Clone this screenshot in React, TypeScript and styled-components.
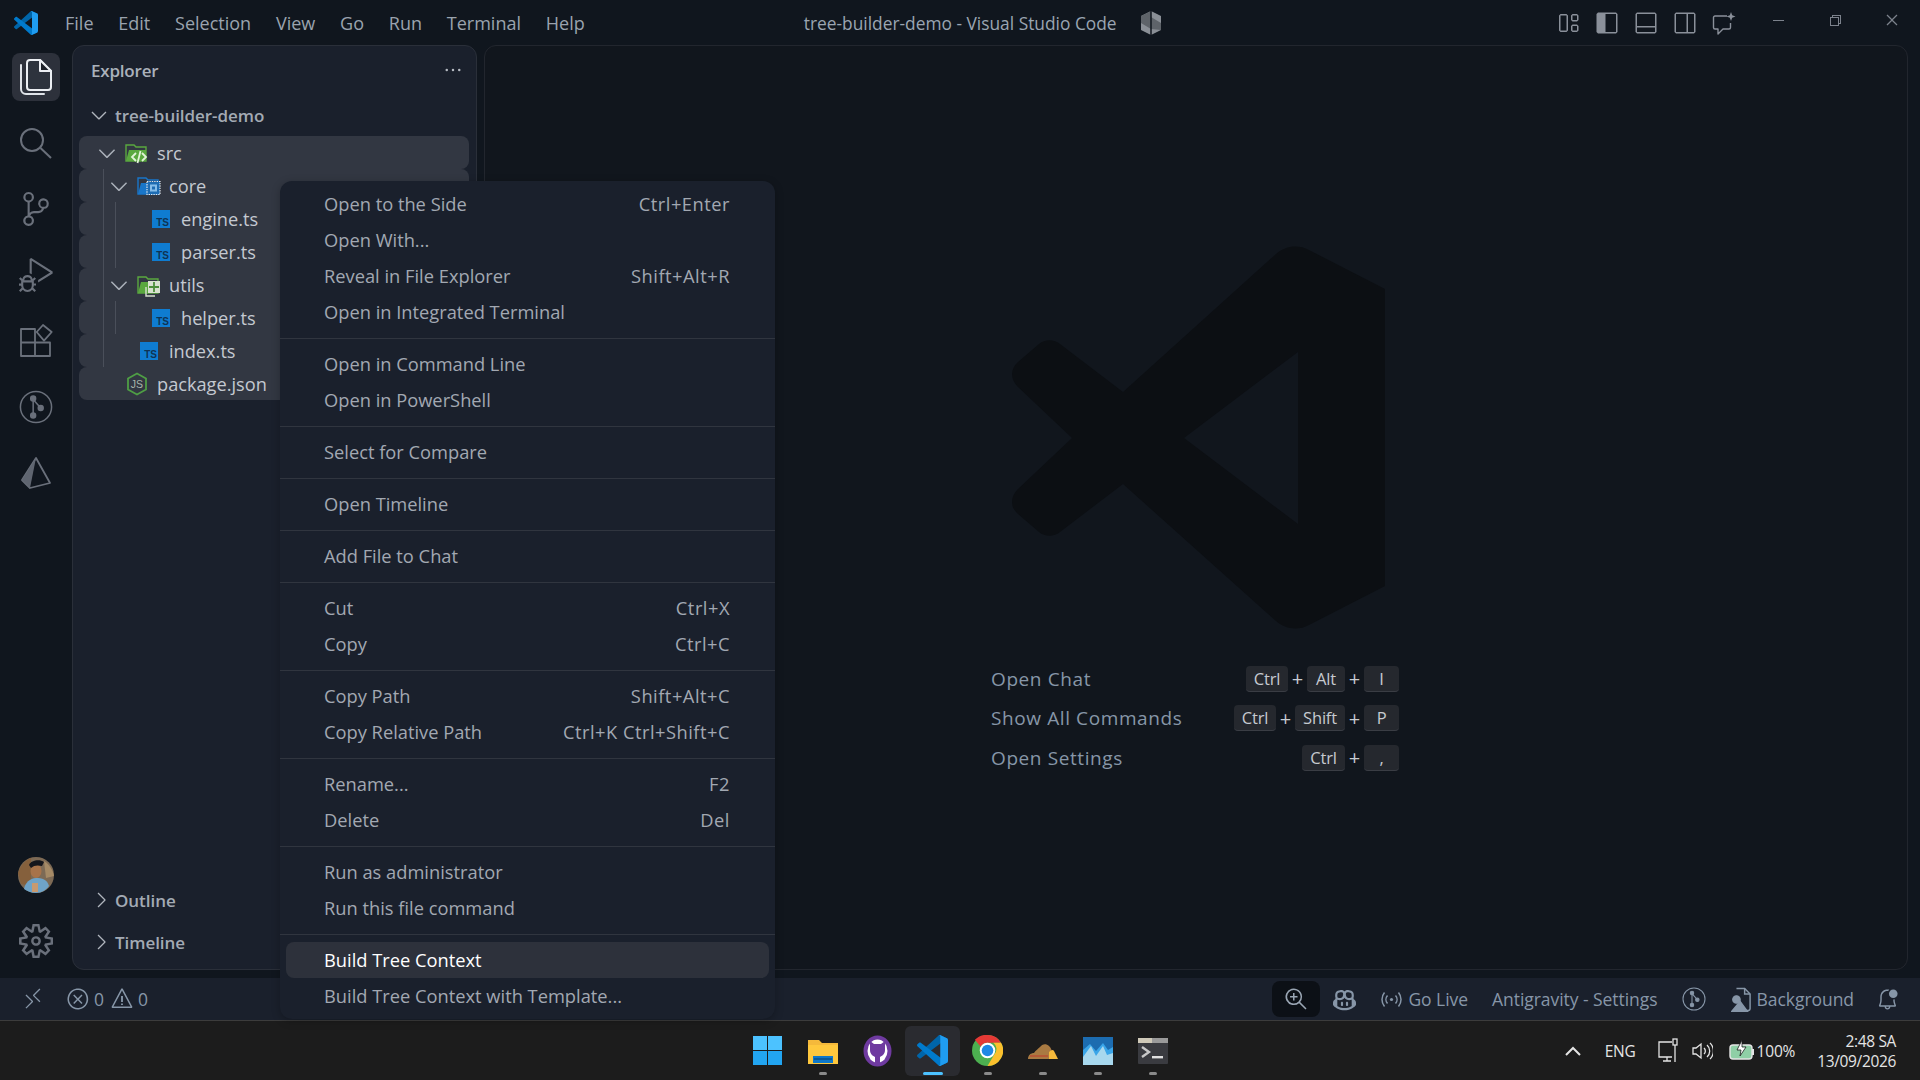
import React from "react";
import styled, { createGlobalStyle } from "styled-components";
import {
  VscSourceControl,
  VscDebugAlt,
  VscSettingsGear,
  VscLayout,
  VscLayoutSidebarLeft,
  VscLayoutPanelOff,
  VscLayoutSidebarRightOff,
  VscChevronDown,
  VscChevronRight,
  VscEllipsis,
  VscRemote,
  VscError,
  VscWarning,
  VscZoomIn,
  VscCopilot,
  VscBellDot,
  VscChromeMinimize,
  VscChromeRestore,
  VscChromeClose,
} from "react-icons/vsc";

const FONT = `"Open Sans", "Noto Sans", sans-serif`;

const GlobalStyle = createGlobalStyle`
  html, body {
    margin: 0;
    padding: 0;
    width: 1920px;
    height: 1080px;
    overflow: hidden;
    background: #1c1c1c;
    font-family: ${FONT};
  }
  * { box-sizing: border-box; }
`;

const Screen = styled.div`
  position: relative;
  width: 1920px;
  height: 1080px;
  display: flex;
  flex-direction: column;
  overflow: hidden;
`;

/* title bar */

const TitleBar = styled.div`
  height: 45px;
  flex: none;
  display: flex;
  align-items: center;
  background: #10161e;
`;

const LogoBox = styled.div`
  width: 24px;
  height: 24px;
  margin-left: 14px;
  display: flex;
`;

const MenuBar = styled.div`
  display: flex;
  gap: 24.8px;
  margin-left: 27px;
  font-size: 18px;
  color: #9aa3ae;
`;

const WindowTitle = styled.div`
  margin-left: 219px;
  display: flex;
  align-items: center;
  gap: 23px;
  font-size: 17.35px;
  color: #9aa5b2;
`;

const TitleTools = styled.div`
  margin-left: auto;
  display: flex;
  align-items: center;
  gap: 15px;
  color: #8a909a;
  font-size: 24px;
  margin-right: 184px;
`;

const WindowButtons = styled.div`
  position: absolute;
  top: 12px;
  right: 20px;
  display: flex;
  gap: 41px;
  color: #7c828c;
  font-size: 16px;
`;

/* middle */

const Middle = styled.div`
  flex: 1;
  display: flex;
  min-height: 0;
  background: #10161e;
  padding: 0 12px 8px 0;
`;

const ActivityBar = styled.div`
  width: 72px;
  flex: none;
  display: flex;
  flex-direction: column;
  align-items: center;
  padding-top: 8px;
`;

const ActivityItem = styled.div<{ $active?: boolean }>`
  width: 48px;
  height: 48px;
  margin-bottom: 18px;
  border-radius: 8px;
  display: flex;
  align-items: center;
  justify-content: center;
  font-size: 34px;
  color: ${(p) => (p.$active ? "#e6e9ee" : "#6a707b")};
  background: ${(p) => (p.$active ? "#2d313b" : "transparent")};
`;

const ActivityBottom = styled.div`
  margin-top: auto;
  display: flex;
  flex-direction: column;
  align-items: center;
  gap: 31px;
  padding-bottom: 12px;
  color: #6a707b;
  font-size: 34px;
`;

const Sidebar = styled.div`
  width: 405px;
  flex: none;
  display: flex;
  flex-direction: column;
  background: #1a202c;
  border: 1px solid #2a2f39;
  border-radius: 12px;
`;

const SidebarHead = styled.div`
  height: 48px;
  flex: none;
  display: flex;
  align-items: center;
  justify-content: space-between;
  padding: 0 10px 0 18px;
  font-size: 17px;
  font-weight: 600;
  letter-spacing: -0.2px;
  color: #aab1bb;
`;

const MoreButton = styled.div`
  color: #b5bac2;
  font-size: 20px;
  display: flex;
  margin-right: 3px;
`;

const SectionRow = styled.div<{ $pad: number; $gap: number }>`
  height: 42px;
  flex: none;
  display: flex;
  align-items: center;
  gap: ${(p) => p.$gap}px;
  padding-left: ${(p) => p.$pad}px;
  font-size: 17px;
  font-weight: 600;
  letter-spacing: -0.05px;
  color: #a3aab4;
  svg {
    font-size: 24px;
    flex: none;
    color: #b0b5bd;
  }
`;

const Tree = styled.div`
  display: flex;
  flex-direction: column;
  padding: 0 7px 0 6px;
  flex: 1;
`;

const Row = styled.div<{ $level: number }>`
  position: relative;
  height: 33px;
  flex: none;
  display: flex;
  align-items: center;
  padding-left: ${(p) => 20 + p.$level * 12}px;
  background: #323742;
  border-radius: 8px;
  font-size: 18.2px;
  color: #c4c9d1;
`;

const Guide = styled.span<{ $left: number }>`
  position: absolute;
  top: 0;
  bottom: 0;
  left: ${(p) => p.$left}px;
  width: 1px;
  background: #4a4f5a;
`;

const Chevron = styled.span`
  width: 16px;
  margin-right: 10px;
  flex: none;
  display: flex;
  justify-content: center;
  color: #aab0b9;
  font-size: 26px;
  svg {
    flex: none;
  }
`;

const Spacer = styled.span`
  width: 26px;
  flex: none;
`;

const RowIcon = styled.span`
  width: 24px;
  height: 24px;
  margin-right: 8px;
  flex: none;
  display: flex;
  align-items: center;
  justify-content: center;
`;

const TsIcon = styled.span`
  width: 18px;
  height: 18px;
  display: flex;
  align-items: flex-end;
  justify-content: flex-end;
  padding: 0 1px 1px 0;
  background: #0f7cd1;
  color: #0e3355;
  font-family: "Liberation Sans", sans-serif;
  font-size: 10px;
  line-height: 9px;
  font-weight: 700;
`;

const SideFooter = styled.div`
  margin-top: auto;
  padding-bottom: 6px;
`;

/* editor */

const Editor = styled.div`
  flex: 1;
  display: flex;
  flex-direction: column;
  align-items: center;
  margin-left: 7px;
  padding-top: 200px;
  background: #11161d;
  border: 1px solid #22262e;
  border-radius: 12px;
`;

const Watermark = styled.svg`
  width: 420px;
  height: 420px;
  margin-top: -25px;
  margin-left: 24px;
  flex: none;
`;

const Shortcuts = styled.div`
  width: 408px;
  margin-top: 18px;
  margin-right: 2px;
  display: flex;
  flex-direction: column;
`;

const ShortcutRow = styled.div`
  height: 39.5px;
  display: flex;
  align-items: center;
  justify-content: space-between;
`;

const ShortcutLabel = styled.span`
  font-size: 19px;
  letter-spacing: 0.6px;
  color: #8796a8;
`;

const Keys = styled.span`
  display: flex;
  align-items: center;
`;

const Plus = styled.span`
  width: 19px;
  text-align: center;
  font-size: 20px;
  color: #c8ccd2;
`;

const Key = styled.kbd<{ $w: number }>`
  width: ${(p) => p.$w}px;
  height: 26px;
  display: flex;
  align-items: center;
  justify-content: center;
  font-family: ${FONT};
  font-size: 16.5px;
  letter-spacing: -0.2px;
  color: #c6cad0;
  background: #25282e;
  border-radius: 4px;
  border-bottom: 1px solid #3a3d44;
`;

/* status bar */

const StatusBar = styled.div`
  height: 42px;
  flex: none;
  display: flex;
  align-items: center;
  background: #1a202c;
  color: #8796a8;
  font-size: 17.5px;
  letter-spacing: -0.05px;
`;

const StatusLeft = styled.div`
  display: flex;
  align-items: center;
  padding-left: 21px;
  svg {
    font-size: 24px;
  }
`;

const StatusGap = styled.span`
  width: 21px;
`;

const StatusCount = styled.span`
  margin: 0 6px 0 4px;
`;

const StatusRight = styled.div`
  margin-left: auto;
  display: flex;
  align-items: center;
  padding-right: 21px;
`;

const StatusItem = styled.div<{ $gap?: number; $inner?: number }>`
  display: flex;
  align-items: center;
  gap: ${(p) => p.$inner ?? 5}px;
  margin-left: ${(p) => p.$gap ?? 24}px;
  svg {
    font-size: 23px;
    flex: none;
  }
`;

const ZoomBox = styled.div`
  width: 48px;
  height: 36px;
  display: flex;
  align-items: center;
  justify-content: center;
  background: #0c1016;
  border-radius: 8px;
  color: #9aa6b4;
  font-size: 24px;
`;

/* taskbar */

const Taskbar = styled.div`
  position: relative;
  height: 60px;
  flex: none;
  display: flex;
  align-items: center;
  justify-content: center;
  background: #1c1c1c;
  border-top: 1px solid #3c3c3c;
`;

const TaskItem = styled.div<{ $active?: boolean }>`
  position: relative;
  width: 55px;
  height: 50px;
  display: flex;
  align-items: center;
  justify-content: center;
  border-radius: 6px;
  background: ${(p) => (p.$active ? "#2a2b30" : "transparent")};
  svg {
    flex: none;
  }
`;

const TaskDot = styled.span<{ $active?: boolean }>`
  position: absolute;
  bottom: 1px;
  left: 50%;
  transform: translateX(-50%);
  width: ${(p) => (p.$active ? 20 : 8)}px;
  height: 3px;
  border-radius: 2px;
  background: ${(p) => (p.$active ? "#4cc2ff" : "#8a8a8a")};
`;

const Tray = styled.div`
  position: absolute;
  right: 24px;
  top: 0;
  bottom: 0;
  display: flex;
  align-items: center;
  color: #e4e4e4;
  font-size: 15.5px;
  letter-spacing: -0.2px;
`;

const TrayCaret = styled.span`
  display: flex;
  font-size: 22px;
  margin-right: 24px;
`;

const TrayText = styled.span`
  margin-right: 22px;
`;

const TrayIcon = styled.span<{ $mr?: number }>`
  display: flex;
  margin-right: ${(p) => p.$mr ?? 14}px;
`;

const Clock = styled.div`
  margin-left: 22px;
  text-align: right;
  line-height: 20px;
  letter-spacing: -0.35px;
`;

/* context menu */

const ContextMenu = styled.div`
  position: absolute;
  left: 280px;
  top: 181px;
  width: 495px;
  height: 838px;
  padding: 5px 0;
  background: #1a202c;
  border-radius: 12px;
  box-shadow: 0 2px 8px rgba(0, 0, 0, 0.25);
  overflow: hidden;
`;

const MenuRow = styled.div<{ $selected?: boolean }>`
  height: 36px;
  margin: 0 6px 0 5.5px;
  padding: 0 39px 2px 38.5px;
  display: flex;
  align-items: center;
  justify-content: space-between;
  border-radius: 8px;
  font-size: 18.3px;
  color: ${(p) => (p.$selected ? "#ffffff" : "#a2a8b2")};
  background: ${(p) => (p.$selected ? "#2d313b" : "transparent")};
`;

const MenuKey = styled.span`
  letter-spacing: 0.5px;
`;

const MenuSep = styled.div`
  height: 1px;
  margin: 8px 0 7px;
  background: #30353f;
`;

function VsLogo({ size = 24 }: { size?: number }) {
  return (
    <svg width={size} height={size} viewBox="0 0 100 100">
      <path
        fill="#0065a9"
        d="M96.5 10.8 75.9.9c-2.4-1.2-5.2-.7-7.1 1.2L1.4 63.6c-1.8 1.7-1.8 4.5 0 6.2l5.5 5c1.5 1.3 3.7 1.4 5.3.2L93.4 13.4c2.7-2.1 6.6-.1 6.6 3.3v-.2c0-2.4-1.3-4.6-3.5-5.7z"
      />
      <path
        fill="#007acc"
        d="M96.5 89.2 75.9 99.1c-2.4 1.2-5.2.7-7.1-1.2L1.4 36.4c-1.8-1.7-1.8-4.5 0-6.2l5.5-5c1.5-1.3 3.7-1.4 5.3-.2l81.2 61.6c2.7 2.1 6.6.1 6.6-3.3v.2c0 2.4-1.3 4.6-3.5 5.7z"
      />
      <path
        fill="#1f9cf0"
        d="M75.9 99.1c-2.4 1.2-5.2.7-7.1-1.2 2.3 2.3 6.2.7 6.2-2.6V4.7c0-3.3-3.9-4.9-6.2-2.6 1.9-1.9 4.7-2.4 7.1-1.2l20.6 9.9c2.1 1 3.5 3.2 3.5 5.6v67.2c0 2.4-1.4 4.6-3.5 5.6z"
      />
    </svg>
  );
}

function FilesIcon() {
  return (
    <svg width={36} height={38} viewBox="0 0 36 38" fill="none" strokeLinejoin="round" strokeLinecap="round">
      <path d="M3 7v24a5 5 0 0 0 5 5h18" stroke="#dfe3e8" strokeWidth="2" />
      <path d="M9 5a3 3 0 0 1 3-3h10l11 11v16a3 3 0 0 1-3 3H12a3 3 0 0 1-3-3z" fill="#2d333d" stroke="#eceff3" strokeWidth="2" />
      <path d="M22 2v11h11z" fill="#1d2129" stroke="#eceff3" strokeWidth="2" />
    </svg>
  );
}

function SearchIcon() {
  return (
    <svg width={36} height={36} viewBox="0 0 36 36" fill="none" stroke="#6a707b" strokeWidth="2">
      <circle cx="14" cy="15" r="11" />
      <path d="M22.5 23 33 33" />
    </svg>
  );
}

function ExtensionsIcon() {
  return (
    <svg width={36} height={36} viewBox="0 0 36 36" fill="none" stroke="#6a707b" strokeWidth="1.8" strokeLinejoin="round">
      <path d="M3 6h14v27H3zM3 19.5h29V33H17" />
      <path d="M18.7 9 25 2l8.7 7L26 17.7z" />
    </svg>
  );
}

function AntigravityMark() {
  return (
    <svg width={32} height={32} viewBox="0 0 32 32">
      <path d="M16 1 2 23l8 8 20-5z" fill="none" stroke="#6a707b" strokeWidth="1.8" strokeLinejoin="round" />
      <path d="M16 1 2 23l8 8z" fill="#5f6570" />
    </svg>
  );
}

function BranchCircle({ size = 34, color = "#6a707b" }: { size?: number; color?: string }) {
  return (
    <svg width={size} height={size} viewBox="0 0 36 36" fill="none" stroke={color} strokeWidth="1.6">
      <circle cx="18" cy="18" r="16.5" />
      <path d="M15 9v18M15 10l8 9" />
      <circle cx="15" cy="9" r="2.6" fill={color} />
      <circle cx="15" cy="27" r="2.6" fill={color} />
      <circle cx="23" cy="19" r="2.6" fill={color} />
    </svg>
  );
}

function AccountAvatar() {
  return (
    <svg width={36} height={36} viewBox="0 0 36 36">
      <circle cx="18" cy="18" r="18" fill="#7d6a55" />
      <path d="M0 16C3 7 8 3 13 1v28L3 27z" fill="#85603c" />
      <path d="M26 4c5 3 9 9 10 15l-8 2z" fill="#a58a66" />
      <path d="M6 32c1-6 6-11 12-11s11 1 13 8c-3 4-7 7-13 7-5 0-9-2-12-4z" fill="#6fa3c7" />
      <ellipse cx="18" cy="14" rx="5.5" ry="7" fill="#a8734a" />
      <path d="M11 8c2-5 11-6 15-3l-2 4c-4-1-8-1-11 2z" fill="#15161c" />
      <path d="M14 26h6v9h-6z" fill="#c89a70" />
    </svg>
  );
}

function FolderIcon({ kind }: { kind: "src" | "core" | "utils" }) {
  const base = kind === "core" ? "#1976c9" : "#5aa83f";
  return (
    <svg width={24} height={24} viewBox="0 0 24 24">
      <path d="M1 4h8l2 2h10v14H1z" fill="none" stroke={base} strokeWidth="1.4" />
      <path d="M4 9h17v11H1z" fill={base} />
      {kind === "src" && (
        <g fill="none" stroke="#e2f3d8" strokeWidth="1.8">
          <path d="M11 12l-4 4 4 4M17 12l4 4-4 4M15.5 10l-3 12" />
        </g>
      )}
      {kind === "core" && (
        <g>
          <rect x="10" y="7.5" width="13" height="13" fill="#1e6cb3" stroke="#dfe6ee" strokeWidth="1.2" strokeDasharray="1.4 1" />
          <rect x="13" y="10.5" width="7" height="7" fill="#85bdea" />
          <rect x="15" y="12.5" width="3" height="3" fill="#1e6cb3" />
        </g>
      )}
      {kind === "utils" && (
        <g>
          <rect x="11" y="8" width="12" height="12" fill="#d8e2cf" />
          <path d="M17 9v10M12 14h10" stroke="#4d8f3a" strokeWidth="1.8" />
          <path d="M9 14v9h9" fill="none" stroke="#d8e2cf" strokeWidth="1.4" />
        </g>
      )}
    </svg>
  );
}

function NodeIcon() {
  return (
    <svg width={22} height={24} viewBox="0 0 22 24">
      <path d="M11 1.5 20 6.5v11L11 22.5 2 17.5v-11z" fill="none" stroke="#4f9e45" strokeWidth="1.8" />
      <text x="11" y="16" textAnchor="middle" fontSize="10.5" fontFamily="Liberation Sans, sans-serif" fill="#a8b5ac">
        JS
      </text>
    </svg>
  );
}

function ChatSparkIcon() {
  return (
    <svg width={24} height={24} viewBox="0 0 24 24" fill="none" stroke="#8a909a" strokeWidth="1.4" strokeLinejoin="round">
      <path d="M15 5H3a1.5 1.5 0 0 0-1.5 1.5v10A1.5 1.5 0 0 0 3 18h3v5l5-5h6a1.5 1.5 0 0 0 1.5-1.5V12" />
      <path d="M19 1l1.2 3.3L23.5 5.5l-3.3 1.2L19 10l-1.2-3.3-3.3-1.2 3.3-1.2z" fill="#8a909a" stroke="none" />
    </svg>
  );
}

function BroadcastIcon() {
  return (
    <svg width={23} height={23} viewBox="0 0 23 23" fill="none" stroke="#8796a8" strokeWidth="1.5">
      <circle cx="11.5" cy="11.5" r="1.6" fill="#8796a8" stroke="none" />
      <path d="M7.5 7.5a6 6 0 0 0 0 8M15.5 7.5a6 6 0 0 1 0 8M4.5 4.5a11 11 0 0 0 0 14M18.5 4.5a11 11 0 0 1 0 14" />
    </svg>
  );
}

function WindowsLogo() {
  return (
    <svg width={29} height={29} viewBox="0 0 29 29">
      <rect width="14" height="14" fill="#4cc2ff" />
      <rect x="15" width="14" height="14" fill="#4cc2ff" />
      <rect y="15" width="14" height="14" fill="#22a5f1" />
      <rect x="15" y="15" width="14" height="14" fill="#22a5f1" />
    </svg>
  );
}

function ExplorerIcon() {
  return (
    <svg width={30} height={28} viewBox="0 0 30 28">
      <path d="M0 3h11l3 3h16v21H0z" fill="#f5b93b" />
      <path d="M0 8h30v19H0z" fill="#ffc83d" />
      <rect x="5" y="19" width="20" height="7" fill="#0f78c9" />
      <rect x="6" y="21" width="18" height="2" fill="#0b5a98" />
    </svg>
  );
}

function GithubIcon() {
  return (
    <svg width={29} height={32} viewBox="0 0 29 32">
      <ellipse cx="14.5" cy="16" rx="14" ry="15.5" fill="#6f3aa0" />
      <ellipse cx="14.5" cy="16" rx="10" ry="11.5" fill="#fff" />
      <path d="M7 6l4 3h7l4-3v9c0 4-3 6-5 7v6h-5v-6c-2-1-5-3-5-7z" fill="#6f3aa0" />
    </svg>
  );
}

function ChromeIcon() {
  return (
    <svg width={31} height={31} viewBox="0 0 32 32">
      <circle cx="16" cy="16" r="16" fill="#4caf50" />
      <path d="M16 0a16 16 0 0 1 14 8H16a8 8 0 0 0-7 4L3 5A16 16 0 0 1 16 0z" fill="#e53935" />
      <path d="M30 8a16 16 0 0 1-14 24l7-12a8 8 0 0 0-1-12z" fill="#fbc02d" />
      <circle cx="16" cy="16" r="8" fill="#fff" />
      <circle cx="16" cy="16" r="6" fill="#1e88e5" />
    </svg>
  );
}

function CloudIcon() {
  return (
    <svg width={30} height={16} viewBox="0 0 30 16">
      <path d="M0 16c0-4 3-6 6-6 2-3 4-4 6-6 2-3 6-4 9-1 2 2 3 4 3 7h-1l-1 6z" fill="#a97a42" />
      <path d="M21 9c2-2 4-3 5-1l4 8h-9z" fill="#f5b93b" />
      <path d="M2 13h18" stroke="#c0392b" strokeWidth="1" />
    </svg>
  );
}

function ChartIcon() {
  return (
    <svg width={30} height={28} viewBox="0 0 30 28">
      <rect width="30" height="28" fill="#1c6cb0" />
      <path d="M0 13l7-6 6 7 7-8 5 7 5-3v18H0z" fill="#3aa5e8" />
      <path d="M0 20l8-11 5 10 7-10 4 9 6-2v12H0z" fill="#a8d8ee" />
    </svg>
  );
}

function TerminalIcon() {
  return (
    <svg width={30} height={26} viewBox="0 0 30 26">
      <rect width="30" height="26" rx="1" fill="#3a3b40" />
      <rect width="30" height="5" fill="#9a9a9a" />
      <rect width="14" height="5" fill="#cfc9b8" />
      <path d="M4 9l7 5-7 5" fill="none" stroke="#c8c8c8" strokeWidth="2.4" />
      <rect x="14" y="18" width="11" height="2.4" fill="#e0e0e0" />
    </svg>
  );
}

function ImageFileIcon() {
  return (
    <svg width={20} height={25} viewBox="0 0 22 26" fill="none" stroke="#8796a8" strokeWidth="1.6">
      <path d="M6 1h9l6 6v16a2 2 0 0 1-2 2h-2" />
      <path d="M15 1v6h6" />
      <path d="M1 26 10 15l8 11z" fill="#8796a8" />
      <circle cx="6" cy="13" r="4" fill="#8796a8" />
    </svg>
  );
}

function MonitorIcon() {
  return (
    <svg width={20} height={26} viewBox="0 0 20 26" fill="none" stroke="#e4e4e4" strokeWidth="1.3">
      <path d="M14 4H1v15h13M5 23h8M9 19v4" />
      <rect x="15" y="1" width="4" height="6" />
      <path d="M17 7v17" />
    </svg>
  );
}

function SpeakerIcon() {
  return (
    <svg width={21} height={22} viewBox="0 0 21 22" fill="none" stroke="#e4e4e4" strokeWidth="1.3">
      <path d="M1 8h3l5-4v14l-5-4H1z" />
      <path d="M12 8a4 4 0 0 1 0 6M15 5a8 8 0 0 1 0 12M18 3a11 11 0 0 1 0 16" />
    </svg>
  );
}

function BatteryIcon() {
  return (
    <svg width={25} height={22} viewBox="0 0 25 22">
      <rect x="1" y="5" width="22" height="14" rx="3" fill="#8fcfa6" stroke="#e4e4e4" strokeWidth="1.4" />
      <rect x="23" y="9" width="2" height="6" fill="#e4e4e4" />
      <path d="M13 0 8 10h4l-1 6 6-9h-4z" fill="#fff" stroke="#1c1c1c" strokeWidth="0.8" />
    </svg>
  );
}

function ChevronUpIcon() {
  return (
    <svg width={16} height={10} viewBox="0 0 16 10" fill="none" stroke="#e4e4e4" strokeWidth="2">
      <path d="M1 9l7-7 7 7" />
    </svg>
  );
}

function AntigravityHex() {
  return (
    <svg width={22} height={26} viewBox="0 0 22 26">
      <path d="M11 1 21 6v14l-10 5L1 20V6z" fill="#8a8f96" />
      <path d="M11 1 1 6v7l10 6 10 1v-7L11 7z" fill="#5e6369" />
      <path d="M11 1v24" stroke="#10161e" strokeWidth="1.5" />
    </svg>
  );
}

const MENU: { label: string; key?: string; selected?: boolean }[][] = [
  [
    { label: "Open to the Side", key: "Ctrl+Enter" },
    { label: "Open With..." },
    { label: "Reveal in File Explorer", key: "Shift+Alt+R" },
    { label: "Open in Integrated Terminal" },
  ],
  [{ label: "Open in Command Line" }, { label: "Open in PowerShell" }],
  [{ label: "Select for Compare" }],
  [{ label: "Open Timeline" }],
  [{ label: "Add File to Chat" }],
  [
    { label: "Cut", key: "Ctrl+X" },
    { label: "Copy", key: "Ctrl+C" },
  ],
  [
    { label: "Copy Path", key: "Shift+Alt+C" },
    { label: "Copy Relative Path", key: "Ctrl+K Ctrl+Shift+C" },
  ],
  [
    { label: "Rename...", key: "F2" },
    { label: "Delete", key: "Del" },
  ],
  [{ label: "Run as administrator" }, { label: "Run this file command" }],
  [{ label: "Build Tree Context", selected: true }, { label: "Build Tree Context with Template..." }],
];

const TREE = [
  { name: "src", level: 0, folder: "src" as const, guides: [] as number[] },
  { name: "core", level: 1, folder: "core" as const, guides: [24] },
  { name: "engine.ts", level: 2, guides: [24, 36] },
  { name: "parser.ts", level: 2, guides: [24, 36] },
  { name: "utils", level: 1, folder: "utils" as const, guides: [24] },
  { name: "helper.ts", level: 2, guides: [24, 36] },
  { name: "index.ts", level: 1, guides: [24] },
  { name: "package.json", level: 0, node: true, guides: [] },
];

const SHORTCUTS = [
  { label: "Open Chat", keys: [["Ctrl", 42], ["Alt", 38], ["I", 35]] },
  { label: "Show All Commands", keys: [["Ctrl", 42], ["Shift", 50], ["P", 35]] },
  { label: "Open Settings", keys: [["Ctrl", 43], [",", 35]] },
] as { label: string; keys: [string, number][] }[];

const TASK_ICONS = [
  { id: "start", icon: <WindowsLogo />, dot: false },
  { id: "files", icon: <ExplorerIcon />, dot: true },
  { id: "github", icon: <GithubIcon />, dot: false },
  { id: "code", icon: <VsLogo size={31} />, dot: true, active: true },
  { id: "chrome", icon: <ChromeIcon />, dot: true },
  { id: "cloud", icon: <CloudIcon />, dot: true },
  { id: "chart", icon: <ChartIcon />, dot: true },
  { id: "term", icon: <TerminalIcon />, dot: true },
];

export default function App() {
  return (
    <Screen>
      <GlobalStyle />
      <TitleBar>
        <LogoBox>
          <VsLogo />
        </LogoBox>
        <MenuBar>
          {["File", "Edit", "Selection", "View", "Go", "Run", "Terminal", "Help"].map((m) => (
            <span key={m}>{m}</span>
          ))}
        </MenuBar>
        <WindowTitle>
          tree-builder-demo - Visual Studio Code
          <AntigravityHex />
        </WindowTitle>
        <TitleTools>
          <VscLayout />
          <VscLayoutSidebarLeft />
          <VscLayoutPanelOff />
          <VscLayoutSidebarRightOff />
          <ChatSparkIcon />
        </TitleTools>
        <WindowButtons>
          <VscChromeMinimize />
          <VscChromeRestore />
          <VscChromeClose />
        </WindowButtons>
      </TitleBar>

      <Middle>
        <ActivityBar>
          <ActivityItem $active>
            <FilesIcon />
          </ActivityItem>
          <ActivityItem>
            <SearchIcon />
          </ActivityItem>
          <ActivityItem>
            <VscSourceControl />
          </ActivityItem>
          <ActivityItem>
            <VscDebugAlt />
          </ActivityItem>
          <ActivityItem>
            <ExtensionsIcon />
          </ActivityItem>
          <ActivityItem>
            <BranchCircle />
          </ActivityItem>
          <ActivityItem>
            <AntigravityMark />
          </ActivityItem>
          <ActivityBottom>
            <AccountAvatar />
            <VscSettingsGear />
          </ActivityBottom>
        </ActivityBar>

        <Sidebar>
          <SidebarHead>
            Explorer
            <MoreButton>
              <VscEllipsis />
            </MoreButton>
          </SidebarHead>
          <SectionRow $pad={14} $gap={4}>
            <VscChevronDown />
            tree-builder-demo
          </SectionRow>
          <Tree>
            {TREE.map((n) => (
              <Row key={n.name} $level={n.level}>
                {n.guides.map((g) => (
                  <Guide key={g} $left={g} />
                ))}
                {n.folder ? (
                  <Chevron>
                    <VscChevronDown />
                  </Chevron>
                ) : (
                  <Spacer />
                )}
                <RowIcon>
                  {n.folder ? <FolderIcon kind={n.folder} /> : n.node ? <NodeIcon /> : <TsIcon>TS</TsIcon>}
                </RowIcon>
                {n.name}
              </Row>
            ))}
            <SideFooter>
              <SectionRow $pad={10} $gap={2}>
                <VscChevronRight />
                Outline
              </SectionRow>
              <SectionRow $pad={10} $gap={2}>
                <VscChevronRight />
                Timeline
              </SectionRow>
            </SideFooter>
          </Tree>
        </Sidebar>

        <Editor>
          <Watermark viewBox="0 0 420 420">
            <path
              fill="#0c0f13"
              fillRule="evenodd"
              d="M278 33c9-8 22-10 33-4l76 39v297l-76 39c-11 6-24 4-33-4L125 263 62 311c-6 5-15 5-21 0l-21-18c-8-7-8-17 0-25l54-51-54-51c-8-8-8-18 0-25l21-18c6-5 15-5 21 0l63 48zM300 131 186 217l114 86z"
            />
          </Watermark>
          <Shortcuts>
            {SHORTCUTS.map((s) => (
              <ShortcutRow key={s.label}>
                <ShortcutLabel>{s.label}</ShortcutLabel>
                <Keys>
                  {s.keys.map(([k, w], i) => (
                    <React.Fragment key={k}>
                      {i > 0 && <Plus>+</Plus>}
                      <Key $w={w}>{k}</Key>
                    </React.Fragment>
                  ))}
                </Keys>
              </ShortcutRow>
            ))}
          </Shortcuts>
        </Editor>
      </Middle>

      <StatusBar>
        <StatusLeft>
          <VscRemote />
          <StatusGap />
          <VscError />
          <StatusCount>0</StatusCount>
          <VscWarning />
          <StatusCount>0</StatusCount>
        </StatusLeft>
        <StatusRight>
          <ZoomBox>
            <VscZoomIn />
          </ZoomBox>
          <StatusItem $gap={13}>
            <VscCopilot />
          </StatusItem>
          <StatusItem $gap={24}>
            <BroadcastIcon />
            Go Live
          </StatusItem>
          <StatusItem>Antigravity - Settings</StatusItem>
          <StatusItem $gap={24}>
            <BranchCircle size={24} color="#8796a8" />
          </StatusItem>
          <StatusItem $gap={25} $inner={6}>
            <ImageFileIcon />
            Background
          </StatusItem>
          <StatusItem $gap={22}>
            <VscBellDot />
          </StatusItem>
        </StatusRight>
      </StatusBar>

      <Taskbar>
        {TASK_ICONS.map((t) => (
          <TaskItem key={t.id} $active={t.active}>
            {t.icon}
            {t.dot && <TaskDot $active={t.active} />}
          </TaskItem>
        ))}
        <Tray>
          <TrayCaret>
            <ChevronUpIcon />
          </TrayCaret>
          <TrayText>ENG</TrayText>
          <TrayIcon>
            <MonitorIcon />
          </TrayIcon>
          <TrayIcon $mr={16}>
            <SpeakerIcon />
          </TrayIcon>
          <TrayIcon $mr={3}>
            <BatteryIcon />
          </TrayIcon>
          100%
          <Clock>
            2:48 SA
            <br />
            13/09/2026
          </Clock>
        </Tray>
      </Taskbar>

      <ContextMenu>
        {MENU.map((group, i) => (
          <React.Fragment key={i}>
            {i > 0 && <MenuSep />}
            {group.map((item) => (
              <MenuRow key={item.label} $selected={item.selected}>
                <span>{item.label}</span>
                {item.key && <MenuKey>{item.key}</MenuKey>}
              </MenuRow>
            ))}
          </React.Fragment>
        ))}
      </ContextMenu>
    </Screen>
  );
}
